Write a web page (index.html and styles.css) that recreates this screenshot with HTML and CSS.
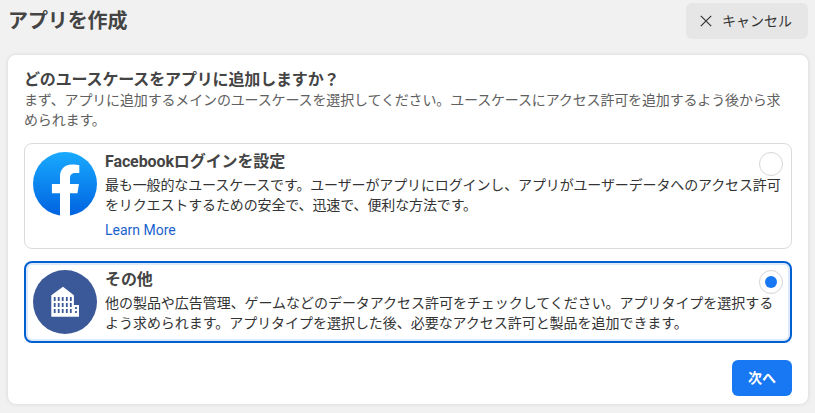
FILE: index.html
```html
<!DOCTYPE html>
<html lang="ja">
<head>
<meta charset="utf-8">
<title>アプリを作成</title>
<link rel="stylesheet" href="styles.css">
</head>
<body>
<header class="topbar">
  <h1 class="title">アプリを作成</h1>
  <button class="cancel" type="button">
    <svg class="close" viewBox="0 0 12 12" width="12" height="12"><path d="M.8.8l10.4 10.4M11.2.8L.8 11.2"/></svg>
    <span>キャンセル</span>
  </button>
</header>
<main class="card">
  <h2 class="question">どのユースケースをアプリに追加しますか？</h2>
  <p class="intro">まず、アプリに追加するメインのユースケースを選択してください。ユースケースにアクセス許可を追加するよう後から求められます。</p>
  <section class="option">
    <svg class="logo" viewBox="0 0 64 64" width="64" height="64">
      <defs><linearGradient id="blue" x1="0" y1="0" x2="0" y2="1"><stop offset="0" stop-color="#19aaff"/><stop offset="1" stop-color="#0062e0"/></linearGradient></defs>
      <circle cx="32" cy="32" r="32" fill="url(#blue)"/>
      <path fill="#fff" d="M27 63.7V41.3h-8.1V32H27v-7.1c0-8 4.8-12.4 12.1-12.4 3.5 0 7.2.6 7.2.6V21h-4c-4 0-5.3 2.5-5.3 5v6h8.9l-1.4 9.3H37v22.4a32 32 0 0 1-10 0z"/>
    </svg>
    <div class="body">
      <h3 class="name">Facebookログインを設定</h3>
      <p class="text">最も一般的なユースケースです。ユーザーがアプリにログインし、アプリがユーザーデータへのアクセス許可をリクエストするための安全で、迅速で、便利な方法です。</p>
      <a class="more">Learn More</a>
    </div>
    <span class="radio"></span>
  </section>
  <section class="option selected">
    <svg class="logo" viewBox="0 0 64 64" width="64" height="64">
      <circle cx="32" cy="32" r="32" fill="#3b5998"/>
      <path fill="#fff" d="M18.3 46.7V25.2L30 16.8l10.9 8.4V35H46v11.7z"/>
      <path fill="none" stroke="#3b5998" stroke-width="1.8" d="M21.7 27v4m4-4v4m4-4v4m4.1-4v4m4-4v4M21.7 33v4m4-4v4m4-4v4m4.1-4v4m4-4v4M21.7 39v4m4-4v4m4-4v4m4.1-4v4m4-4v4M43 37v2m0 2v2"/>
    </svg>
    <div class="body">
      <h3 class="name">その他</h3>
      <p class="text">他の製品や広告管理、ゲームなどのデータアクセス許可をチェックしてください。アプリタイプを選択するよう求められます。アプリタイプを選択した後、必要なアクセス許可と製品を追加できます。</p>
    </div>
    <span class="radio checked"></span>
  </section>
  <footer class="actions"><button class="next" type="button">次へ</button></footer>
</main>
</body>
</html>
```
FILE: styles.css
```css
* { box-sizing: border-box; }
body {
  margin: 0;
  height: 413px;
  overflow: hidden;
  padding: 3px 7px 0 8px;
  background: #f1f1f1;
  color: #444;
  font: 14px/20px Roboto, "Noto Sans CJK JP", sans-serif;
}
h1, h2, h3, p { margin: 0; }
button { border: 0; font: inherit; }
.topbar { display: flex; justify-content: space-between; height: 52px; }
.title { font-size: 20px; line-height: 24px; margin-top: 6px; letter-spacing: -.1px; }
.cancel {
  display: flex;
  align-items: center;
  gap: 10px;
  width: 122px;
  height: 36px;
  padding: 0 0 0 14px;
  border-radius: 6px;
  background: #e6e6e6;
  color: #333;
}
.close { fill: none; stroke: #333; stroke-width: 1.2; }
.card {
  width: 800px;
  height: 349px;
  padding: 14px 16px 8px;
  border-radius: 8px;
  background: #fff;
  box-shadow: 0 0 4px rgba(0, 0, 0, .12);
}
.question { font-size: 16px; line-height: 20px; margin-top: 1px; letter-spacing: -.15px; }
.intro { color: #606060; margin-bottom: 13px; letter-spacing: -.15px; }
.option {
  position: relative;
  display: flex;
  gap: 8px;
  height: 106px;
  padding: 8px;
  margin-bottom: 12px;
  border: 1px solid #dadada;
  border-radius: 8px;
}
.selected {
  height: 82px;
  padding: 7px;
  margin-bottom: 17px;
  border: 2px solid #0060d0;
  box-shadow: inset 0 0 0 2px #dce9fa;
}
.logo { flex: none; }
.body { flex: 1; min-width: 0; margin-right: -2px; }
.name { font-size: 16px; line-height: 20px; margin-bottom: 3px; letter-spacing: -.1px; }
.text { color: #333; letter-spacing: -.13px; }
.selected .text { letter-spacing: -.04px; }
.more { display: block; margin-top: 5px; color: #1b62cc; }
.radio {
  position: absolute;
  top: 8px;
  right: 8px;
  display: grid;
  place-items: center;
  width: 24px;
  height: 24px;
  border: 1px solid #d5d5d5;
  border-radius: 50%;
  background: #fff;
}
.selected .radio { top: 7px; right: 7px; }
.checked::after { content: ""; width: 12px; height: 12px; border-radius: 50%; background: #1877f2; }
.actions { display: flex; justify-content: flex-end; }
.next {
  width: 60px;
  height: 36px;
  padding: 0;
  border-radius: 6px;
  background: #1877f2;
  color: #fff;
  font-weight: 700;
}
```
